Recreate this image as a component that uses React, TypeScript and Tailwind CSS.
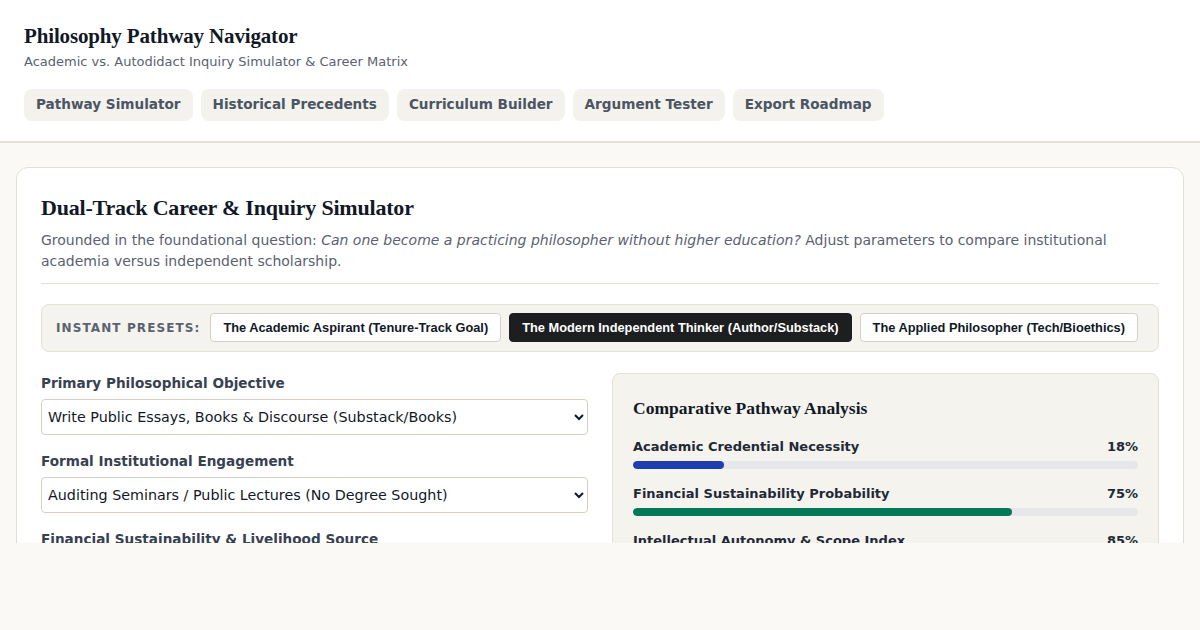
import { useState } from "react";

const tabs = ["Pathway Simulator", "Historical Precedents", "Curriculum Builder", "Argument Tester", "Export Roadmap"];

const presets = [
  "The Academic Aspirant (Tenure-Track Goal)",
  "The Modern Independent Thinker (Author/Substack)",
  "The Applied Philosopher (Tech/Bioethics)",
];

const metrics = [
  { label: "Academic Credential Necessity", value: 18, bar: "bg-[#1e40af]" },
  { label: "Financial Sustainability Probability", value: 75, bar: "bg-[#047857]" },
  { label: "Intellectual Autonomy & Scope Index", value: 85, bar: "bg-[#6d28d9]" },
];

const serif = "font-['Liberation_Serif',serif]";
const sans = "font-['DejaVu_Sans',sans-serif]";
const selectCls =
  "mt-[6px] w-full h-9 pl-[2px] pr-2 rounded border border-[#d6d0c4] bg-white text-[14.3px] text-[#111827]";

export default function App() {
  const [preset, setPreset] = useState(1);
  const [objective, setObjective] = useState("essays");
  const [engagement, setEngagement] = useState("audit");

  return (
    <div className={`h-[630px] bg-[#faf9f5] ${sans}`}>
      <header className="bg-white border-b-2 border-[#e4e0d6] px-6 pt-[22px] pb-5">
        <h1 className={`${serif} text-[21px] font-bold text-[#111827] leading-7 tracking-[-0.15px]`}>
          Philosophy Pathway Navigator
        </h1>
        <p className="text-[13px] text-[#5b6170] mt-[2px]">Academic vs. Autodidact Inquiry Simulator &amp; Career Matrix</p>
        <nav className="flex gap-2 mt-[17px]">
          {tabs.map((t) => (
            <button key={t} className="h-8 px-3 rounded-lg bg-[#f3f2ed] text-[13.6px] font-bold text-[#4b5563]">
              {t}
            </button>
          ))}
        </nav>
      </header>

      <main className="h-[400px] overflow-hidden px-4 pt-6">
        <section className="bg-white border border-[#e4e0d6] rounded-xl px-6 pt-[26px] pb-6">
          <h2 className={`${serif} text-[22px] font-bold text-[#111827] leading-7 tracking-[-0.2px]`}>
            Dual-Track Career &amp; Inquiry Simulator
          </h2>
          <p className="text-sm text-[#5b6170] leading-[21px] mt-2 pb-[11px] border-b border-[#e4e0d6]">
            Grounded in the foundational question: <em>Can one become a practicing philosopher without higher education?</em>{" "}
            Adjust parameters to compare institutional academia versus independent scholarship.
          </p>

          <div className="mt-5 flex items-center gap-2 bg-[#f4f3ee] border border-[#e4e0d6] rounded-lg px-[14px] h-12">
            <span className="whitespace-nowrap text-xs font-bold tracking-[1.1px] text-[#5b6170] mr-0.5">
              INSTANT PRESETS:
            </span>
            {presets.map((p, i) => (
              <button
                key={p}
                onClick={() => setPreset(i)}
                className={`whitespace-nowrap h-[29px] px-3 rounded text-[12.8px] font-bold font-['Liberation_Sans',sans-serif] border ${
                  preset === i ? "bg-[#1d1e20] border-[#1d1e20] text-white" : "bg-white border-[#d6d0c4] text-[#111827]"
                }`}
              >
                {p}
              </button>
            ))}
          </div>

          <div className="grid grid-cols-2 gap-6 mt-[21px]">
            <div>
              <label className="block text-[13.6px] leading-5 font-bold text-[#374151]">Primary Philosophical Objective</label>
              <select value={objective} onChange={(e) => setObjective(e.target.value)} className={selectCls}>
                <option value="essays">Write Public Essays, Books &amp; Discourse (Substack/Books)</option>
                <option value="research">Publish Peer-Reviewed Research</option>
              </select>

              <label className="block text-[13.6px] leading-5 font-bold text-[#374151] mt-4">Formal Institutional Engagement</label>
              <select value={engagement} onChange={(e) => setEngagement(e.target.value)} className={selectCls}>
                <option value="audit">Auditing Seminars / Public Lectures (No Degree Sought)</option>
                <option value="phd">Full PhD Program</option>
              </select>

              <label className="block text-[13.6px] leading-5 font-bold text-[#374151] mt-4">
                Financial Sustainability &amp; Livelihood Source
              </label>
              <select className={selectCls}>
                <option>Writing Income &amp; Reader Subscriptions</option>
              </select>
            </div>

            <div className="bg-[#f4f3ee] border border-[#e4e0d6] rounded-lg px-5 pt-5 pb-5">
              <h3 className={`${serif} text-[17.5px] font-bold text-[#111827] leading-7`}>Comparative Pathway Analysis</h3>
              <div className="mt-[15px] flex flex-col gap-[15px]">
                {metrics.map((m) => (
                  <div key={m.label}>
                    <div className="flex justify-between text-[13px] font-bold text-[#1f2937] leading-5">
                      <span>{m.label}</span>
                      <span>{m.value}%</span>
                    </div>
                    <div className="mt-1 h-2 rounded-full bg-[#e5e7eb] overflow-hidden">
                      <div className={`h-full rounded-full ${m.bar}`} style={{ width: `${m.value}%` }} />
                    </div>
                  </div>
                ))}
              </div>
            </div>
          </div>
        </section>
      </main>
    </div>
  );
}
